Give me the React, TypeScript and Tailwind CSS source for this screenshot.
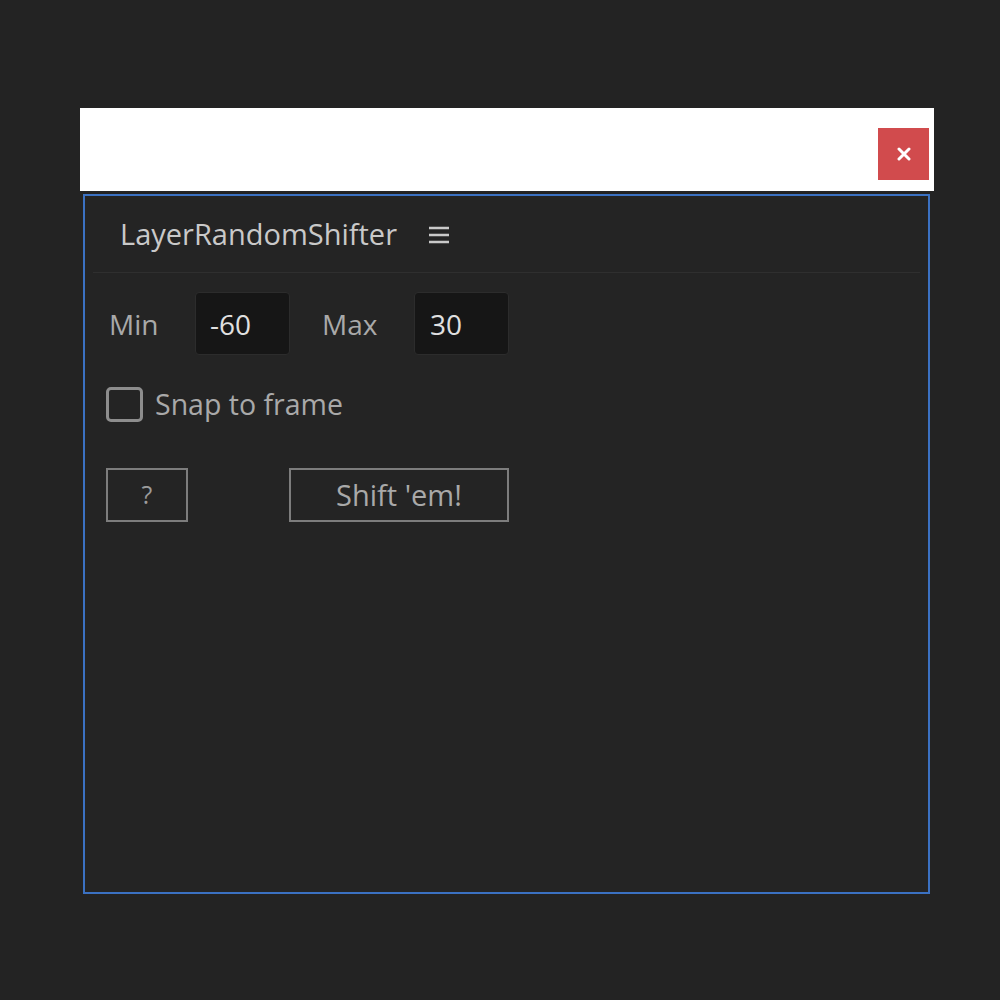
export default function App() {
  return (
    <div
      className="w-full h-[1000px] bg-[#232323] pt-[108px] pl-[80px] text-[#bdbdbd]"
      style={{ fontFamily: '"Open Sans", "Noto Sans", sans-serif' }}
    >
      {/* Window title bar */}
      <div className="w-[854px] h-[83px] bg-white flex justify-end items-start pt-[20px] pr-[5px]">
        <button className="w-[51px] h-[52px] bg-[#d14b4d] flex items-center justify-center text-white">
          <svg width="14" height="14" viewBox="0 0 14 14">
            <path d="M2 2L12 12M12 2L2 12" stroke="white" strokeWidth="3" strokeLinecap="round" />
          </svg>
        </button>
      </div>

      {/* Panel */}
      <div className="ml-[3px] mt-[3px] w-[847px] h-[700px] border-2 border-[#3b71c2] bg-[#242424] flex flex-col">
        <div className="h-[77px] flex items-center pl-[27px] gap-[31px] mx-[8px] border-b border-[#2f2f2f]">
          <span className="text-[29px] text-[#c9c9c9]">LayerRandomShifter</span>
          <svg width="22" height="20" viewBox="0 0 22 20" className="mt-[2px]">
            <path d="M1 3H21M1 10H21M1 17H21" stroke="#c9c9c9" strokeWidth="2.6" />
          </svg>
        </div>

        <div className="flex flex-col pl-[21px] pt-[19px]">
          <div className="flex items-center h-[63px] text-[28px]">
            <span className="w-[89px] pl-[3px] text-[#a9a9a9]">Min</span>
            <div className="w-[95px] h-[63px] bg-[#161616] border border-[#2c2c2c] rounded-[4px] flex items-center pl-[14px] text-[#e0e0e0]">
              -60
            </div>
            <span className="ml-[32px] w-[92px] text-[#a9a9a9]">Max</span>
            <div className="w-[95px] h-[63px] bg-[#161616] border border-[#2c2c2c] rounded-[4px] flex items-center pl-[15px] text-[#e0e0e0]">
              30
            </div>
          </div>

          <label className="mt-[32px] flex items-center gap-[12px] h-[35px] text-[28.5px] text-[#a9a9a9]">
            <span className="w-[37px] h-[35px] border-[3px] border-[#8d8d8d] rounded-[5px] block" />
            <span>Snap to frame</span>
          </label>

          <div className="mt-[46px] flex items-center">
            <button className="w-[82px] h-[54px] border-2 border-[#7d7d7d] text-[25px] text-[#9b9b9b] flex items-center justify-center">
              ?
            </button>
            <button className="ml-[101px] w-[220px] h-[54px] border-2 border-[#7d7d7d] text-[29px] text-[#a9a9a9] flex items-center justify-center">
              Shift 'em!
            </button>
          </div>
        </div>
      </div>
    </div>
  );
}
